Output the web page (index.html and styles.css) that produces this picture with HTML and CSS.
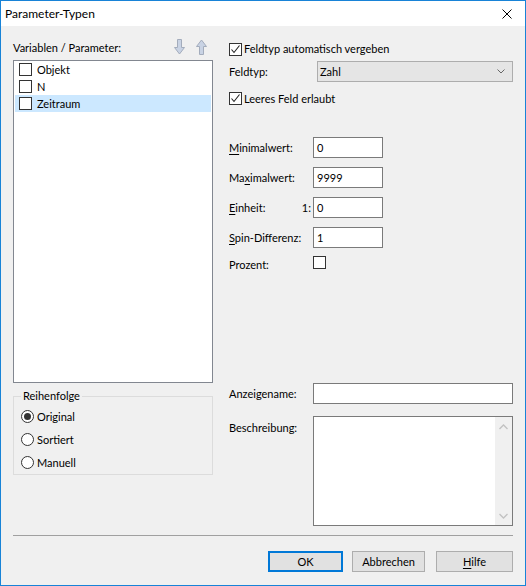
FILE: index.html
```html
<!DOCTYPE html>
<html lang="de">
<head>
<meta charset="utf-8">
<title>Parameter-Typen</title>
<link rel="stylesheet" href="styles.css">
</head>
<body>
<div class="window">
  <div class="titlebar">
    <span class="title">Parameter-Typen</span>
    <svg class="close" width="10" height="10" viewBox="0 0 10 10"><path d="M0.5 0.5 L9.5 9.5 M9.5 0.5 L0.5 9.5" stroke="#000" stroke-width="1" fill="none"/></svg>
  </div>
  <div class="client">
    <div class="main">
      <div class="left">
        <div class="list-head">
          <span>Variablen / Parameter:</span>
          <span class="arrows">
            <svg width="11" height="16" viewBox="0 0 11 16"><path d="M3.5 0.5 H7.5 V8.5 H10.5 L5.5 15 L0.5 8.5 H3.5 Z" fill="#c9d3e4" stroke="#a3acbc" stroke-width="1"/></svg>
            <svg width="11" height="16" viewBox="0 0 11 16"><path d="M3.5 15.5 H7.5 V7.5 H10.5 L5.5 1 L0.5 7.5 H3.5 Z" fill="#c9d3e4" stroke="#a3acbc" stroke-width="1"/></svg>
          </span>
        </div>
        <div class="listbox">
          <div class="item"><span class="box"></span>Objekt</div>
          <div class="item"><span class="box"></span>N</div>
          <div class="item selected"><span class="box"></span>Zeitraum</div>
        </div>
        <fieldset class="group">
          <legend>Reihenfolge</legend>
          <div class="radio-row"><span class="radio checked"></span>Original</div>
          <div class="radio-row"><span class="radio"></span>Sortiert</div>
          <div class="radio-row"><span class="radio"></span>Manuell</div>
        </fieldset>
      </div>
      <div class="right">
        <div class="check-row first">
          <span class="box checked"><svg width="11" height="11" viewBox="0 0 11 11"><path d="M1.5 5.5 L4 8.5 L9.5 1.5" stroke="#222" stroke-width="1.1" fill="none"/></svg></span>
          <span>Feldtyp automatisch vergeben</span>
        </div>
        <div class="field-row select-row">
          <span class="label wide">Feldtyp:</span>
          <div class="select">
            <span>Zahl</span>
            <svg width="8" height="5" viewBox="0 0 8 5"><path d="M0.5 0.5 L4 4 L7.5 0.5" stroke="#666" stroke-width="1" fill="none"/></svg>
          </div>
        </div>
        <div class="check-row second">
          <span class="box checked"><svg width="11" height="11" viewBox="0 0 11 11"><path d="M1.5 5.5 L4 8.5 L9.5 1.5" stroke="#222" stroke-width="1.1" fill="none"/></svg></span>
          <span>Leeres Feld erlaubt</span>
        </div>
        <div class="field-row num first-num">
          <span class="label"><span><u>M</u>inimalwert:</span></span>
          <div class="input small">0</div>
        </div>
        <div class="field-row num">
          <span class="label"><span>Ma<u>x</u>imalwert:</span></span>
          <div class="input small">9999</div>
        </div>
        <div class="field-row num">
          <span class="label"><span><u>E</u>inheit:</span><span class="prefix">1:</span></span>
          <div class="input small">0</div>
        </div>
        <div class="field-row num">
          <span class="label"><span><u>S</u>pin-Differenz:</span></span>
          <div class="input small">1</div>
        </div>
        <div class="field-row pct">
          <span class="label pct-label">Prozent:</span>
          <span class="box"></span>
        </div>
        <div class="field-row name">
          <span class="label">Anzeigename:</span>
          <div class="input wide-input"></div>
        </div>
        <div class="field-row desc">
          <span class="label desc-label">Beschreibung:</span>
          <div class="textarea">
            <div class="scrollbar">
              <svg width="9" height="6" viewBox="0 0 9 6"><path d="M0.5 5 L4.5 1 L8.5 5" stroke="#c2c2c2" stroke-width="1.3" fill="none"/></svg>
              <svg width="9" height="6" viewBox="0 0 9 6"><path d="M0.5 1 L4.5 5 L8.5 1" stroke="#c2c2c2" stroke-width="1.3" fill="none"/></svg>
            </div>
          </div>
        </div>
      </div>
    </div>
    <div class="separator"></div>
    <div class="buttons">
      <div class="btn default ok">OK</div>
      <div class="btn cancel">Abbrechen</div>
      <div class="btn help"><u>H</u>ilfe</div>
    </div>
  </div>
</div>
</body>
</html>
```

FILE: styles.css
```css
* { box-sizing: border-box; }
html, body { margin: 0; padding: 0; background: #fff; }
body {
  font-family: Lato, "Noto Sans", "Liberation Sans", sans-serif;
  font-size: 11px;
  line-height: 16px;
  color: #000;
  white-space: nowrap;
}
u { text-decoration: underline; text-underline-offset: 2px; }

.window {
  width: 526px;
  height: 586px;
  border: 1px solid #1883d7;
  background: #f0f0f0;
  display: flex;
  flex-direction: column;
}
.titlebar {
  height: 25px;
  flex: none;
  background: #fff;
  display: flex;
  align-items: center;
  justify-content: space-between;
  padding: 0 13px 0 4px;
}
.title { font-size: 12px; }
.close { display: block; }

.client {
  flex: 1;
  padding: 0 12px;
  display: flex;
  flex-direction: column;
}
.main {
  height: 500px;
  display: flex;
}
.left {
  width: 200px;
  display: flex;
  flex-direction: column;
}
.list-head {
  margin-top: 14px;
  height: 16px;
  display: flex;
  justify-content: space-between;
  align-items: center;
  padding-right: 6px;
}
.arrows { display: flex; gap: 11px; margin-top: -2px; }
.arrows svg { display: block; }

.listbox {
  margin-top: 4px;
  height: 323px;
  border: 1px solid #828790;
  background: #fff;
  padding: 0 1px;
}
.item {
  height: 17px;
  display: flex;
  align-items: center;
  padding-left: 4px;
}
.item.selected { background: #cce8ff; }
.item .box { margin-right: 5px; }

.box {
  width: 13px;
  height: 13px;
  border: 1px solid #333;
  background: #fff;
  display: inline-flex;
  align-items: center;
  justify-content: center;
  flex: none;
}
.box svg { display: block; }

.group {
  margin: 5px 0 0;
  padding: 1px 0 0 7px;
  border: 1px solid #dcdcdc;
  min-width: 0;
  width: 200px;
}
.group legend {
  padding: 0 2px;
  line-height: 16px;
}
.radio-row {
  height: 23px;
  display: flex;
  align-items: center;
}
.radio {
  width: 13px;
  height: 13px;
  border: 1px solid #333;
  border-radius: 50%;
  background: #fff;
  margin-right: 3px;
  display: flex;
  align-items: center;
  justify-content: center;
}
.radio.checked::after {
  content: "";
  width: 7px;
  height: 7px;
  border-radius: 50%;
  background: #333;
}

.right {
  margin-left: 16px;
  width: 284px;
  display: flex;
  flex-direction: column;
}
.check-row {
  display: flex;
  align-items: center;
  gap: 2px;
}
.check-row.first { margin-top: 15px; height: 16px; }
.check-row.second { margin-top: 8px; height: 17px; }

.field-row {
  display: flex;
  align-items: center;
}
.label {
  width: 84px;
  flex: none;
  display: flex;
  justify-content: space-between;
  padding-right: 2px;
}
.label.wide { width: 88px; }
.select-row { margin-top: 4px; height: 21px; }
.select {
  flex: 1;
  height: 21px;
  border: 1px solid #adadad;
  background: #e5e5e5;
  display: flex;
  align-items: center;
  justify-content: space-between;
  padding: 0 7px 0 2px;
}
.select svg { display: block; }

.input {
  height: 21px;
  border: 1px solid #7a7a7a;
  background: #fff;
  padding: 0 3px;
  display: flex;
  align-items: center;
}
.input.small { width: 70px; }
.input.wide-input { width: 200px; }
.num { height: 21px; margin-top: 9px; }
.num.first-num { margin-top: 30px; }

.pct { margin-top: 8px; height: 13px; align-items: flex-start; }
.pct-label { margin-top: 1px; }

.name { margin-top: 114px; height: 21px; }
.desc { margin-top: 12px; align-items: flex-start; }
.desc-label { padding-top: 4px; }
.textarea {
  width: 200px;
  height: 110px;
  border: 1px solid #7a7a7a;
  background: #fff;
  display: flex;
  justify-content: flex-end;
}
.scrollbar {
  width: 17px;
  height: 100%;
  background: #f0f0f0;
  display: flex;
  flex-direction: column;
  justify-content: space-between;
  align-items: center;
  padding: 7px 0 6px;
}
.scrollbar svg { display: block; }

.separator {
  margin-top: 9px;
  height: 1px;
  background: #a0a0a0;
}
.buttons {
  margin-top: 15px;
  display: flex;
  justify-content: flex-end;
}
.btn {
  height: 21px;
  border: 1px solid #adadad;
  background: #e1e1e1;
  display: flex;
  align-items: center;
  justify-content: center;
}
.btn.default { border: 2px solid #0078d7; }
.ok { width: 75px; }
.cancel { width: 73px; margin-left: 9px; }
.help { width: 77px; margin-left: 11px; }
```
